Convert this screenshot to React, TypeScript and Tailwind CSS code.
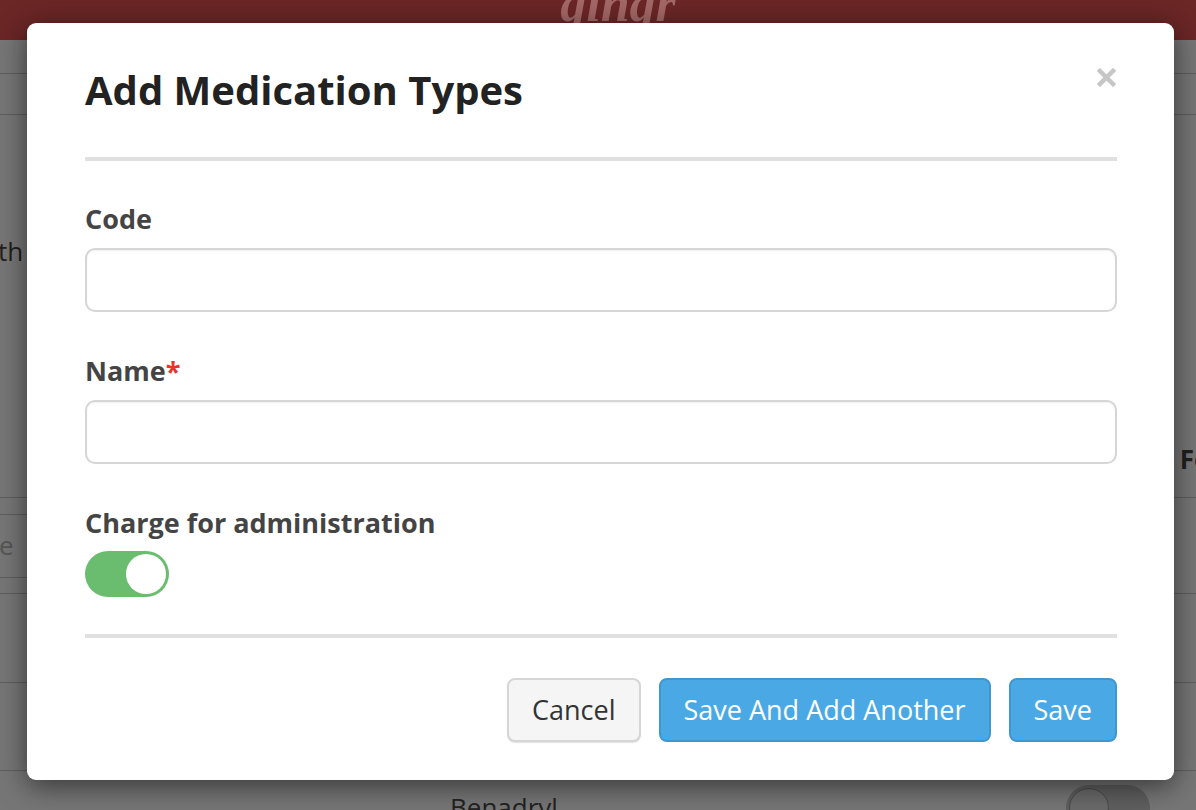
import React, { useState } from 'react';

const font = { fontFamily: '"Open Sans", "Noto Sans", sans-serif' };

const BackgroundPage: React.FC = () => (
  <div className="h-[810px] w-[1196px] overflow-hidden bg-[#767676] text-[#1f1f1f]" style={font}>
    {/* header bar */}
    <div className="flex h-[40px] justify-center overflow-hidden bg-[#6b2626]">
      <span
        className="-mt-[22px] pl-[40px] text-[52px] font-bold italic leading-none text-[#a36767]"
        style={{ fontFamily: '"Liberation Serif", serif' }}
      >
        gingr
      </span>
    </div>
    <div className="h-[34px] border-b border-[#5e5e5e]" />
    <div className="h-[41px] border-b border-[#5e5e5e]" />
    <div className="flex h-[382px] justify-between">
      <span className="-ml-[2px] mt-[118px] text-[26px] leading-[36px]">th</span>
      <span className="-mr-[14px] mt-[326px] text-[26px] font-bold leading-[36px]">Fo</span>
    </div>
    <div className="flex h-[97px] items-center border-t border-b border-[#5e5e5e]">
      <div className="-ml-[10px] flex h-[64px] w-[60px] items-center border border-[#5e5e5e] pl-[8px] text-[26px] text-[#555]">
        e
      </div>
    </div>
    <div className="h-[89px] border-b border-[#5e5e5e]" />
    <div className="h-[88px] border-b border-[#5e5e5e]" />
    <div className="flex h-[40px] items-start justify-between">
      <span className="ml-[450px] mt-[18px] text-[26px] leading-[36px] text-[#222]">Benadryl</span>
      <div className="mr-[46px] mt-[14px] h-[46px] w-[84px] rounded-full bg-[#5f5f5f] p-[3px]">
        <div className="h-[40px] w-[40px] rounded-full border border-[#4a4a4a] bg-[#6a6a6a]" />
      </div>
    </div>
  </div>
);

const Field: React.FC<{ label: string; required?: boolean }> = ({ label, required }) => (
  <div>
    <label className="mb-[11px] block text-[27px] font-bold leading-[36px] text-[#444]">
      {label}
      {required && <span className="text-[#e8352b]">*</span>}
    </label>
    <input
      type="text"
      className="block h-[64px] w-full rounded-[10px] border-2 border-[#d6d6d6] bg-white px-4 text-[26px] shadow-[inset_0_1px_2px_rgba(0,0,0,0.06)] outline-none"
    />
  </div>
);

export default function App() {
  const [charge, setCharge] = useState(true);

  return (
    <div className="relative h-[810px] w-[1196px] overflow-hidden" style={font}>
      <BackgroundPage />

      {/* modal overlay */}
      <div className="absolute inset-0 pl-[27px] pt-[23px]">
        <div className="w-[1147px] rounded-[9px] bg-white pb-[38px] pl-[58px] pr-[57px] pt-[43px] shadow-[0_6px_28px_rgba(0,0,0,0.55)]">
          <div className="flex items-start justify-between">
            <h2 className="text-[40px] font-bold leading-[48px] text-[#222]">Add Medication Types</h2>
            <button className="mr-[1px] mt-[2px] text-[#c6c6c6]" aria-label="Close">
              <svg width="19" height="19" viewBox="0 0 19 19">
                <path d="M3 3 L16 16 M16 3 L3 16" stroke="currentColor" strokeWidth="4.5" strokeLinecap="square" />
              </svg>
            </button>
          </div>

          <div className="mb-[40px] mt-[43px] h-[4px] bg-[#e0e0e0]" />

          <div className="flex flex-col gap-[41px]">
            <Field label="Code" />
            <Field label="Name" required />
            <div>
              <label className="mb-[10px] block text-[27px] font-bold leading-[36px] text-[#444]">
                Charge for administration
              </label>
              <button
                onClick={() => setCharge(!charge)}
                className={`flex h-[46px] w-[84px] items-center rounded-full p-[3px] ${
                  charge ? 'justify-end bg-[#6abd6e]' : 'justify-start bg-[#dcdcdc]'
                }`}
              >
                <span className="h-[40px] w-[40px] rounded-full bg-white" />
              </button>
            </div>
          </div>

          <div className="mb-[40px] mt-[37px] h-[4px] bg-[#e0e0e0]" />

          <div className="flex justify-end gap-[18px]">
            <button className="h-[64px] rounded-[8px] border-2 border-[#d6d6d6] bg-[#f5f5f5] px-[23px] text-[27px] text-[#333] shadow-[0_1px_1px_rgba(0,0,0,0.12)]">
              Cancel
            </button>
            <button className="h-[64px] rounded-[8px] border-2 border-[#3f97d0] bg-[#4aa9e4] px-[23px] text-[27px] text-white">
              Save And Add Another
            </button>
            <button className="h-[64px] rounded-[8px] border-2 border-[#3f97d0] bg-[#4aa9e4] px-[23px] text-[27px] text-white">
              Save
            </button>
          </div>
        </div>
      </div>
    </div>
  );
}
